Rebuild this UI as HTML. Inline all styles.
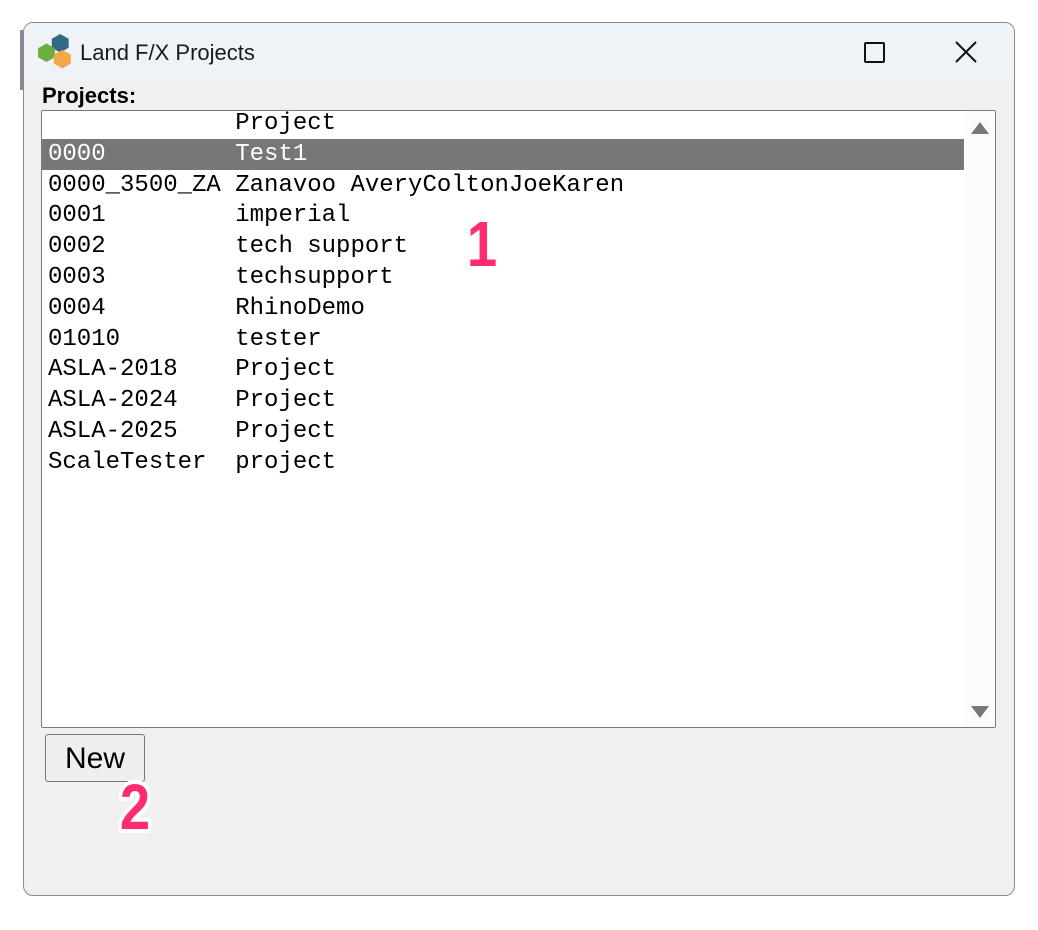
<!DOCTYPE html>
<html><head><meta charset="utf-8"><style>
html,body{margin:0;padding:0;background:#fff;width:1038px;height:930px;overflow:hidden;position:relative;font-family:"Liberation Sans",sans-serif}
.win{position:absolute;left:23px;top:22px;width:990px;height:872px;border:1px solid #8a8a8a;border-radius:10px;background:#f0f0f0;overflow:hidden}
.title{position:absolute;left:0;top:0;width:100%;height:58px;background:#eef3f8}
.ttext{position:absolute;left:56px;top:17px;font-size:22px;color:#1a1a1a}
.lbl{position:absolute;left:18px;top:60px;font-size:22px;font-weight:bold;color:#000}
.list{position:absolute;left:17px;top:87px;width:953px;height:616px;background:#fff;border:1px solid #7a7a7a;border-radius:2px}
.rows{position:absolute;left:0;top:0;font-family:"Liberation Mono",monospace;font-size:24px;color:#000}
.row{position:absolute;left:0;height:31px;line-height:31px;width:922px;white-space:pre;padding-left:6px;box-sizing:border-box}
.sel{background:#777;color:#fff}
.sb{position:absolute;right:0;top:0;width:30px;height:100%;background:#fbfbfb}
.btn{position:absolute;left:21px;top:711px;width:100px;height:48px;border:1px solid #777;border-radius:3px;background:#efefef;font-size:30px;line-height:48px;text-align:center;color:#000;box-sizing:border-box}
</style></head><body>
<div style="position:absolute;left:20px;top:30px;width:3px;height:60px;background:#889"></div>
<div class="win">
 <div class="title">
  <svg style="position:absolute;left:13px;top:10px" width="38" height="38" viewBox="0 0 36 36">
   <polygon points="22,1 30,5.5 30,14 22,18.5 14,14 14,5.5" fill="#2f6a80"/>
   <polygon points="9,10 17,14.5 17,23 9,27.5 1,23 1,14.5" fill="#6cae3f"/>
   <polygon points="24,16 32,20.5 32,29 24,33.5 16,29 16,20.5" fill="#f0a84a"/>
  </svg>
  <div class="ttext">Land F/X Projects</div>
  <div style="position:absolute;left:840px;top:19px;width:17px;height:17px;border:2px solid #111;border-radius:2px"></div>
  <svg style="position:absolute;left:931px;top:18px" width="22" height="22" viewBox="0 0 22 22"><path d="M1 1L21 21M21 1L1 21" stroke="#111" stroke-width="2"/></svg>
 </div>
 <div class="lbl">Projects:</div>
 <div class="list">
  <div class="rows">
   <div class="row" style="top:-3px">             Project</div>
   <div class="row sel" style="top:28px">0000         Test1</div>
   <div class="row" style="top:59px">0000_3500_ZA Zanavoo AveryColtonJoeKaren</div>
   <div class="row" style="top:89px">0001         imperial</div>
   <div class="row" style="top:120px">0002         tech support</div>
   <div class="row" style="top:151px">0003         techsupport</div>
   <div class="row" style="top:182px">0004         RhinoDemo</div>
   <div class="row" style="top:213px">01010        tester</div>
   <div class="row" style="top:243px">ASLA-2018    Project</div>
   <div class="row" style="top:274px">ASLA-2024    Project</div>
   <div class="row" style="top:305px">ASLA-2025    Project</div>
   <div class="row" style="top:336px">ScaleTester  project</div>
  </div>
  <div class="sb">
   <svg style="position:absolute;left:5px;top:10px" width="20" height="14"><polygon points="10,1 19,13 1,13" fill="#777"/></svg>
   <svg style="position:absolute;left:5px;top:594px" width="20" height="14"><polygon points="1,1 19,1 10,13" fill="#777"/></svg>
  </div>
 </div>
 <div class="btn">New</div>
</div>
<svg style="position:absolute;left:0;top:0" width="1038" height="930">
 <text x="482" y="266" text-anchor="middle" font-family="Liberation Sans" font-weight="bold" font-size="64" fill="#ff2d6f" stroke="#fff" stroke-width="8" paint-order="stroke" stroke-linejoin="round" transform="translate(482 0) scale(0.85 1) translate(-482 0)">1</text>
 <text x="135" y="829" text-anchor="middle" font-family="Liberation Sans" font-weight="bold" font-size="64" fill="#ff2d6f" stroke="#fff" stroke-width="8" paint-order="stroke" stroke-linejoin="round" transform="translate(135 0) scale(0.85 1) translate(-135 0)">2</text>
</svg>
</body></html>
